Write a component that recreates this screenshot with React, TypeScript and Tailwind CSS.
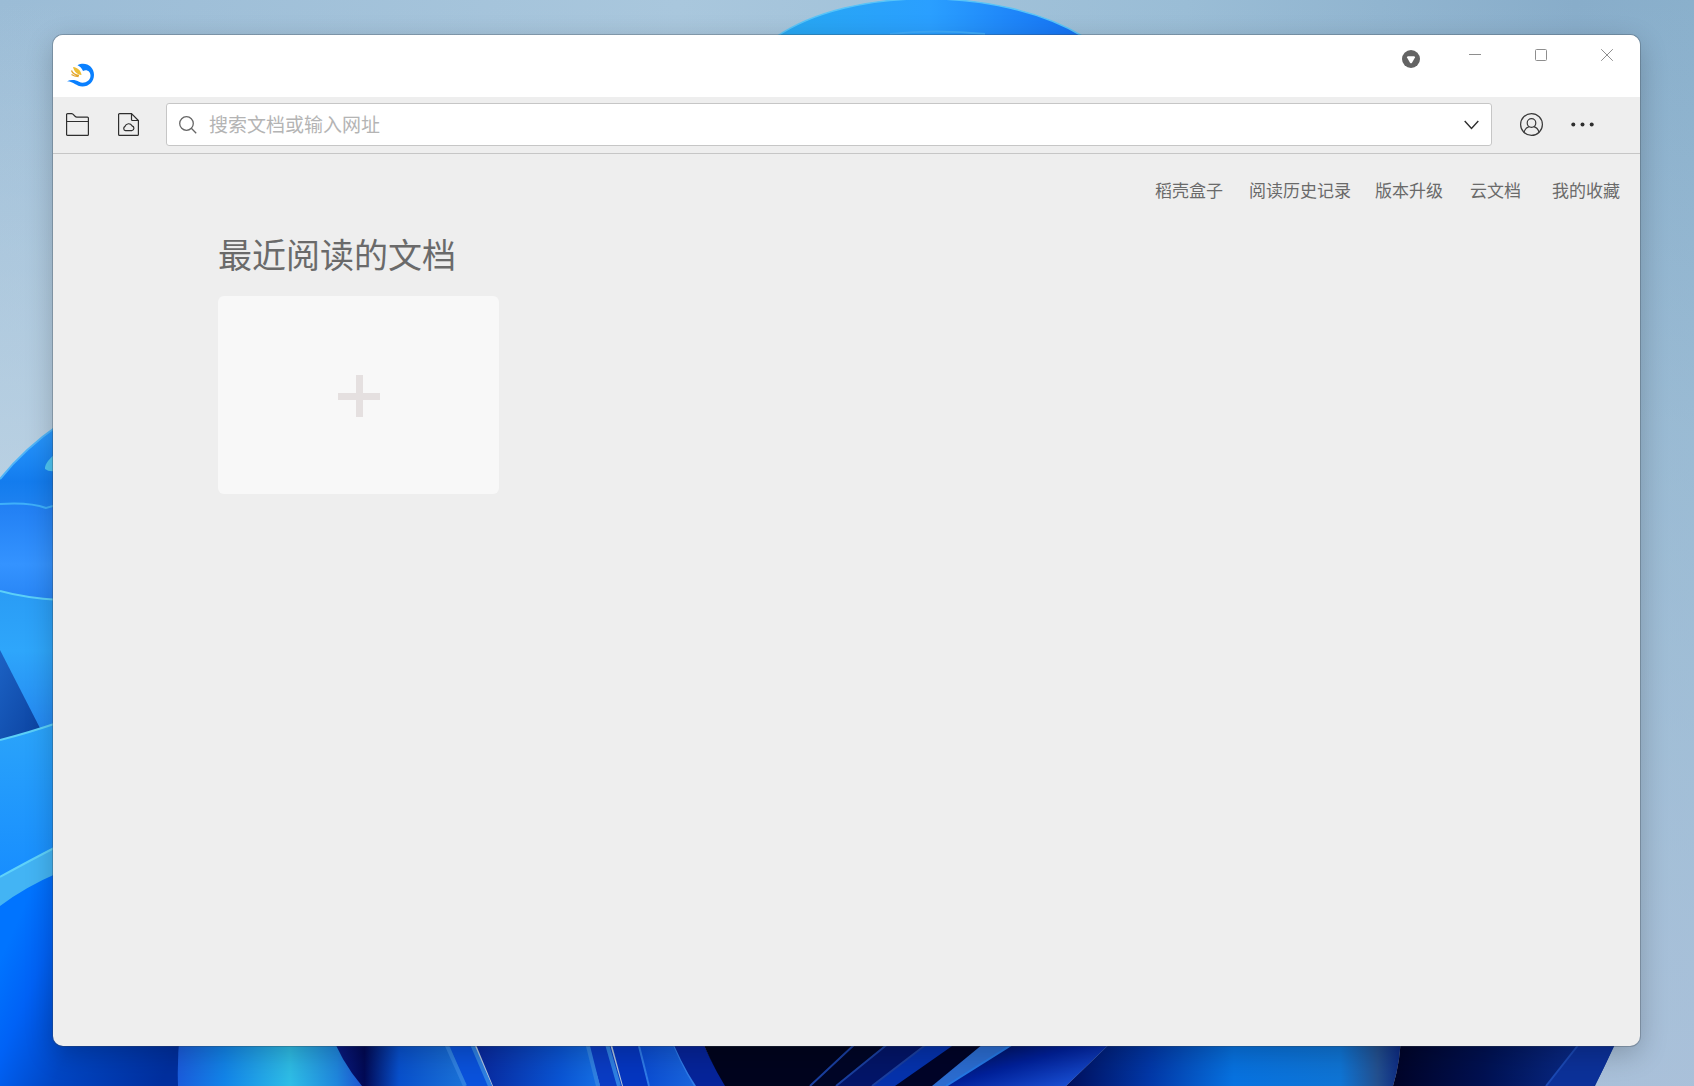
import type { ReactNode } from "react";

const links = [
    { label: "稻壳盒子", className: "mr-[26px]" },
    { label: "阅读历史记录", className: "mr-6" },
    { label: "版本升级", className: "mr-[27px]" },
    { label: "云文档", className: "mr-[31px]" },
    { label: "我的收藏", className: "" },
];

function Wallpaper() {
    return (
        <svg
            className="absolute inset-0 h-full w-full"
            viewBox="0 0 1694 1086"
            preserveAspectRatio="none"
            aria-hidden="true"
        >
            <defs>
                <linearGradient id="sky" x1="0" y1="0" x2="1" y2="0">
                    <stop offset="0" stopColor="#9bbcd6" />
                    <stop offset="0.4" stopColor="#a9c7dd" />
                    <stop offset="0.7" stopColor="#9abdd6" />
                    <stop offset="0.93" stopColor="#88adca" />
                    <stop offset="1" stopColor="#8ab0cc" />
                </linearGradient>
                <linearGradient id="haze" x1="0" y1="0" x2="0" y2="1">
                    <stop offset="0" stopColor="#b8cfe2" stopOpacity="0" />
                    <stop offset="0.4" stopColor="#b8cfe2" stopOpacity="0.35" />
                    <stop offset="1" stopColor="#b4c6de" stopOpacity="0.75" />
                </linearGradient>
                <linearGradient id="glow" x1="0" y1="0" x2="0" y2="1">
                    <stop offset="0" stopColor="#bdd3e4" stopOpacity="0" />
                    <stop offset="1" stopColor="#bdd3e4" stopOpacity="0.8" />
                </linearGradient>
                <linearGradient id="arc" x1="0" y1="0" x2="1" y2="0">
                    <stop offset="0" stopColor="#27a8f2" />
                    <stop offset="0.5" stopColor="#2a9fff" />
                    <stop offset="1" stopColor="#1470f4" />
                </linearGradient>
                <linearGradient id="petalA" x1="0" y1="0" x2="0" y2="1">
                    <stop offset="0" stopColor="#2b9bff" />
                    <stop offset="0.6" stopColor="#137cee" />
                    <stop offset="1" stopColor="#2485f2" />
                </linearGradient>
                <linearGradient id="petalB" x1="0" y1="0" x2="0" y2="1">
                    <stop offset="0" stopColor="#217ff3" />
                    <stop offset="0.6" stopColor="#3493ff" />
                    <stop offset="1" stopColor="#2683f4" />
                </linearGradient>
                <linearGradient id="petalC" x1="0" y1="0" x2="0" y2="1">
                    <stop offset="0" stopColor="#2a9cf5" />
                    <stop offset="0.4" stopColor="#2ea6fb" />
                    <stop offset="1" stopColor="#2384f0" />
                </linearGradient>
                <linearGradient id="shade" x1="0" y1="0" x2="1" y2="1">
                    <stop offset="0" stopColor="#1c62c4" />
                    <stop offset="1" stopColor="#0a419f" />
                </linearGradient>
                <linearGradient id="petalD" x1="0" y1="0" x2="0" y2="1">
                    <stop offset="0" stopColor="#2ba4fa" />
                    <stop offset="1" stopColor="#168cff" />
                </linearGradient>
                <linearGradient id="deep" gradientUnits="userSpaceOnUse" x1="0" y1="960" x2="180" y2="1040">
                    <stop offset="0" stopColor="#0074ff" />
                    <stop offset="0.2" stopColor="#0062f6" />
                    <stop offset="0.5" stopColor="#0046c4" />
                    <stop offset="1" stopColor="#002f9e" />
                </linearGradient>
                <linearGradient id="b1" x1="0" y1="0" x2="1" y2="0">
                    <stop offset="0" stopColor="#1a5cdc" />
                    <stop offset="0.25" stopColor="#1284e8" />
                    <stop offset="0.6" stopColor="#2ebde6" />
                    <stop offset="0.85" stopColor="#1f86dc" />
                    <stop offset="1" stopColor="#1c4fcf" />
                </linearGradient>
                <linearGradient id="b2" x1="0" y1="0" x2="1" y2="0">
                    <stop offset="0" stopColor="#0b2090" />
                    <stop offset="0.25" stopColor="#020a55" />
                    <stop offset="0.5" stopColor="#0850cc" />
                    <stop offset="1" stopColor="#1c74d8" />
                </linearGradient>
                <linearGradient id="b3" x1="0" y1="0" x2="1" y2="0">
                    <stop offset="0" stopColor="#082498" />
                    <stop offset="0.7" stopColor="#0a55d4" />
                    <stop offset="1" stopColor="#1670e4" />
                </linearGradient>
                <linearGradient id="b4" x1="0" y1="0" x2="1" y2="0">
                    <stop offset="0" stopColor="#0848d0" />
                    <stop offset="1" stopColor="#1a66dc" />
                </linearGradient>
                <linearGradient id="b5" x1="0" y1="0" x2="1" y2="1">
                    <stop offset="0" stopColor="#00041c" />
                    <stop offset="0.5" stopColor="#00209a" />
                    <stop offset="1" stopColor="#2464ea" />
                </linearGradient>
                <linearGradient id="b6" x1="0" y1="0" x2="1" y2="0">
                    <stop offset="0" stopColor="#000f5c" />
                    <stop offset="0.25" stopColor="#0238a8" />
                    <stop offset="0.5" stopColor="#0772e0" />
                    <stop offset="0.82" stopColor="#0f74d4" />
                    <stop offset="0.93" stopColor="#23508f" />
                    <stop offset="1" stopColor="#0c2a84" />
                </linearGradient>
                <linearGradient id="b7" x1="0" y1="0" x2="1" y2="0">
                    <stop offset="0" stopColor="#000428" />
                    <stop offset="0.4" stopColor="#001152" />
                    <stop offset="1" stopColor="#0d359f" />
                </linearGradient>
            </defs>

            <rect width="1694" height="1086" fill="url(#sky)" />
            <rect width="1694" height="1086" fill="url(#haze)" />
            <rect width="60" height="480" fill="url(#glow)" />

            {/* bloom tip above the window */}
            <path d="M776 37C850 -14 1000 -14 1084 37Z" fill="url(#arc)" />
            <path d="M776 37C850 -14 1000 -14 1084 37" fill="none" stroke="#58c4f8" strokeWidth="1.5" />
            <path d="M890 34Q935 29 985 34" fill="none" stroke="#3daafb" strokeWidth="2" />

            {/* petals on the left */}
            <path d="M0 479Q25 448 60 424V520H0Z" fill="url(#petalA)" />
            <path d="M0 479Q25 448 60 424" fill="none" stroke="#4fb4f8" strokeWidth="2" />
            <path d="M60 450Q44 462 45 469Q50 473 60 470Z" fill="#4fc6f4" />
            <path d="M0 504Q30 502 46 508L60 504V605H0Z" fill="url(#petalB)" />
            <path d="M0 504Q30 502 46 508L60 504" fill="none" stroke="#3fb0fa" strokeWidth="2" />
            <path d="M0 591Q25 598 60 600V740H0Z" fill="url(#petalC)" />
            <path d="M0 591Q25 598 60 600" fill="none" stroke="#5cd0f8" strokeWidth="2" />
            <path d="M0 650L42 732L0 745Z" fill="url(#shade)" />
            <path d="M0 740Q28 733 60 722V860L0 890Z" fill="url(#petalD)" />
            <path d="M0 740Q28 733 60 722" fill="none" stroke="#5cd0f8" strokeWidth="2" />
            <path d="M0 877Q25 863 60 845V880L0 910Z" fill="#43b4f4" />
            <path d="M0 877Q25 863 60 845" fill="none" stroke="#5fd2fa" strokeWidth="2" />
            <path d="M0 906Q25 887 60 872L190 1030V1086H0Z" fill="url(#deep)" />

            {/* folds along the bottom */}
            <path d="M180 1030Q177 1060 178 1086H365L330 1030Z" fill="url(#b1)" />
            <path d="M330 1030Q340 1060 362 1086H468L443 1030Z" fill="url(#b2)" />
            <path d="M443 1030L466 1086H492L466 1030Z" fill="#0a52dc" />
            <path d="M440 1030L465 1086M466 1030L490 1086" stroke="#2f80e2" strokeWidth="4" />
            <path d="M470 1030L493 1086H600L584 1030Z" fill="url(#b3)" />
            <path d="M584 1030L600 1086H622L606 1030Z" fill="#0a3cc4" />
            <path d="M584 1030L598 1086M603 1030L619 1086" stroke="#2f80e2" strokeWidth="4" />
            <path d="M608 1030L623 1086H651L635 1030Z" fill="#0536c0" />
            <path d="M635 1030L650 1086H696L666 1030Z" fill="url(#b4)" />
            <path d="M635 1030L649 1086M668 1030Q680 1062 695 1086" fill="none" stroke="#2f7ce8" strokeWidth="2" />
            <path d="M668 1030Q680 1062 696 1086H727Q708 1058 698 1030Z" fill="#06249a" />
            <path d="M698 1030Q708 1058 725 1086H820L870 1030Z" fill="#00041e" />
            <path d="M870 1030L810 1086H840L905 1030Z" fill="#000627" />
            <path d="M905 1030L836 1086H875L945 1030Z" fill="#031568" />
            <path d="M945 1030L872 1086H934L1030 1030Z" fill="#000428" />
            <path d="M945 1030L872 1086H895L975 1030Z" fill="#0532ac" />
            <path d="M870 1030L810 1086M905 1030L836 1086M945 1030L872 1086" stroke="#1a3f9f" strokeWidth="2" />
            <path d="M1000 1030L932 1086H948L1035 1030Z" fill="#2b6cd0" />
            <path d="M1035 1030L946 1086H1066L1124 1030Z" fill="url(#b5)" />
            <path d="M1035 1030L946 1086" stroke="#2478e4" strokeWidth="2" />
            <path d="M1124 1030L1066 1086H1393Q1401 1060 1401 1030Z" fill="url(#b6)" />
            <path d="M1401 1030Q1401 1060 1393 1086H1595L1622 1030Z" fill="url(#b7)" />
            <path d="M1590 1030L1546 1086H1594Q1606 1066 1620 1030Z" fill="#0c3199" />
            <path d="M1590 1030L1546 1086" stroke="#1b49b4" strokeWidth="2" />
        </svg>
    );
}

function Logo() {
    return (
        <svg width="27" height="24" viewBox="0 0 27 24" fill="none" aria-hidden="true">
            <path
                d="M10.500 2.200C18 -2 27 3 27 11.700C27 18.500 22 23.500 15.500 23.500C9 23.500 7 18.500 0 18.300C4 16.300 9 17 12 18.800C17 21.300 23.500 18 23.500 12.700C23.500 8.200 19.500 6 16 8C15 5.500 13 3.200 10.500 2.200Z"
                fill="#0a80ff"
            />
            <path d="M6 4C11 4.500 14 8 14.500 12C10 11.500 7 8.500 6 4Z" fill="#edbd35" />
            <path d="M4.500 7.500C5.500 10.500 8.500 12 12 12.500M4.500 11.500C6.500 13 9 13.500 11.500 13.500" stroke="#e3a52b" strokeWidth="1.300" />
        </svg>
    );
}

function IconButton({
    label,
    className = "",
    children,
}: {
    label: string;
    className?: string;
    children: ReactNode;
}) {
    return (
        <button
            type="button"
            aria-label={label}
            className={`flex shrink-0 items-center justify-center ${className}`}
        >
            {children}
        </button>
    );
}

function TitleBar() {
    return (
        <header className="flex h-[62px] items-start bg-white">
            <div className="pt-7 pl-[14px]">
                <Logo />
            </div>
            <IconButton label="皮肤" className="mt-[15px] mr-[22px] ml-auto">
                <svg width="18" height="18" viewBox="0 0 18 18">
                    <circle cx="9" cy="9" r="9" fill="#636363" />
                    <path d="M5 7.500Q5 6.300 6.200 6.300H11.800Q13 6.300 13 7.500L10 12.700Q9 13.900 8 12.700Z" fill="#fff" />
                </svg>
            </IconButton>
            <IconButton label="最小化" className="h-10 w-[66px]">
                <svg width="12" height="12" viewBox="0 0 12 12" stroke="#8e8e8e">
                    <path d="M0 5.500H12" />
                </svg>
            </IconButton>
            <IconButton label="最大化" className="h-10 w-[66px]">
                <svg width="12" height="12" viewBox="0 0 12 12" fill="none" stroke="#8e8e8e">
                    <rect x="0.5" y="0.5" width="11" height="11" rx="1" />
                </svg>
            </IconButton>
            <IconButton label="关闭" className="h-10 w-[66px]">
                <svg width="12" height="12" viewBox="0 0 12 12" stroke="#8e8e8e">
                    <path d="M0.200 0.200L11.800 11.800M11.800 0.200L0.200 11.800" />
                </svg>
            </IconButton>
        </header>
    );
}

function Toolbar() {
    return (
        <div className="flex items-center border-b border-[#c6c6c6] pt-[6px] pr-[46px] pb-[7px] pl-[13px]">
            <IconButton label="打开文件">
                <svg width="23" height="23" viewBox="0 0 23 23" fill="none" stroke="#2e2e2e" strokeWidth="1.200">
                    <path d="M0.600 21.400V1.600Q0.600 0.600 1.600 0.600H5.500Q6.300 0.600 6.900 1.200L9.300 3.500Q9.900 4.100 10.700 4.100H21.400Q22.400 4.100 22.400 5.100V21.400Q22.400 22.400 21.400 22.400H1.600Q0.600 22.400 0.600 21.400ZM0.600 8.500H22.400" />
                </svg>
            </IconButton>
            <IconButton label="云文档" className="ml-[29px]">
                <svg width="21" height="23" viewBox="0 0 21 23" fill="none" stroke="#2e2e2e" strokeWidth="1.200">
                    <path d="M13.500 0.600H1.600Q0.600 0.600 0.600 1.600V21.400Q0.600 22.400 1.600 22.400H19.400Q20.400 22.400 20.400 21.400V7.500ZM13.500 0.600V6.500Q13.500 7.500 14.500 7.500H20.400" />
                    <path d="M7.500 17.700A2.300 2.300 0 0 1 7 13.400A3.800 3.800 0 0 1 14 12.800A2.500 2.500 0 0 1 13.800 17.700Z" />
                </svg>
            </IconButton>
            <div className="ml-[27px] flex h-[43px] min-w-0 flex-1 items-center rounded-[3px] border border-[#c6c6c6] bg-white px-3">
                <svg className="shrink-0" width="18" height="18" viewBox="0 0 18 18" fill="none" stroke="#666" strokeWidth="1.300">
                    <circle cx="7.500" cy="7.500" r="6.800" />
                    <path d="M12.300 12.300L17.200 17.200" />
                </svg>
                <input
                    type="text"
                    aria-label="搜索"
                    placeholder="搜索文档或输入网址"
                    className="ml-3 min-w-0 flex-1 pb-0.5 text-[19px] leading-7 text-[#333] outline-none placeholder:text-[#b4b4b4]"
                />
                <IconButton label="展开">
                    <svg width="15" height="10" viewBox="0 0 15 10" fill="none" stroke="#2e2e2e" strokeWidth="1.400">
                        <path d="M0.700 1L7.500 8.500L14.300 1" />
                    </svg>
                </IconButton>
            </div>
            <IconButton label="用户" className="ml-7">
                <svg width="23" height="23" viewBox="0 0 23 23" fill="none" stroke="#3a3a3a" strokeWidth="1.200">
                    <circle cx="11.500" cy="11.500" r="10.900" />
                    <circle cx="11.500" cy="10" r="4.300" />
                    <path d="M4 19.400C4.800 16.300 6.800 14.300 9.300 13.700M19 19.400C18.200 16.300 16.200 14.300 13.700 13.700" />
                </svg>
            </IconButton>
            <IconButton label="更多" className="ml-7">
                <svg width="23" height="5" viewBox="0 0 23 5" fill="#2e2e2e">
                    <circle cx="2.300" cy="2.500" r="2" />
                    <circle cx="11.500" cy="2.500" r="2" />
                    <circle cx="20.700" cy="2.500" r="2" />
                </svg>
            </IconButton>
        </div>
    );
}

export default function App() {
    return (
        <div className="relative flex min-h-screen flex-col overflow-hidden pt-[35px] pr-[54px] pb-10 pl-[53px] font-['Noto_Sans_CJK_SC',sans-serif]">
            <Wallpaper />
            <div className="relative flex flex-1 flex-col overflow-hidden rounded-[10px] bg-[#eee] shadow-[0_0_0_1px_rgba(60,70,80,0.3),0_8px_28px_rgba(0,0,0,0.22)]">
                <TitleBar />
                <Toolbar />
                <nav className="flex justify-end pt-6 pr-5">
                    {links.map((link) => (
                        <a
                            key={link.label}
                            href="#"
                            className={`text-[17px] leading-6 whitespace-nowrap text-[#6a6a6a] ${link.className}`}
                        >
                            {link.label}
                        </a>
                    ))}
                </nav>
                <main className="mt-7 px-[165px]">
                    <h1 className="text-[34px] leading-[48px] text-[#6a6a6a]">最近阅读的文档</h1>
                    <IconButton label="添加文档" className="mt-[18px] h-[198px] w-[281px] rounded-md bg-[#f8f8f8]">
                        <svg width="43" height="43" viewBox="0 0 43 43" stroke="#e5e0e0" strokeWidth="7">
                            <path d="M22.500 1V43M1 22.500H43" />
                        </svg>
                    </IconButton>
                </main>
            </div>
        </div>
    );
}
